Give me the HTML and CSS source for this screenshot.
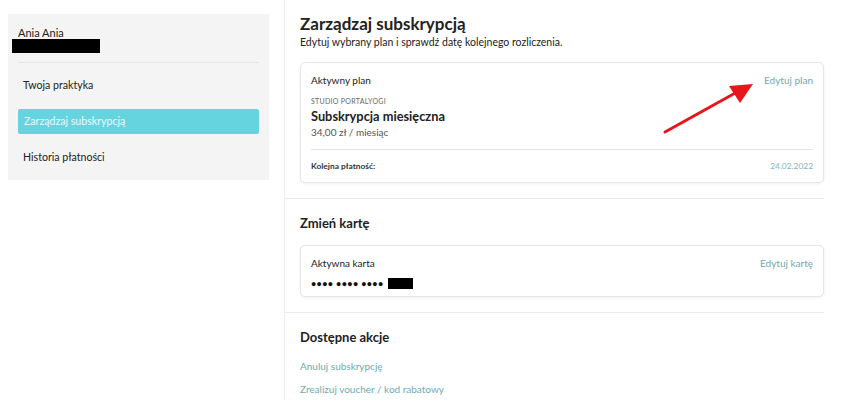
FILE: index.html
```html
<!DOCTYPE html>
<html lang="pl">
<head>
<meta charset="utf-8">
<link rel="stylesheet" href="styles.css">
</head>
<body>
<div class="page">
  <aside class="sidebar">
    <div class="user">
      <div class="user-name">Ania Ania</div>
      <div class="redact redact-email"></div>
    </div>
    <nav class="nav">
      <a class="nav-item">Twoja praktyka</a>
      <a class="nav-item active">Zarządzaj subskrypcją</a>
      <a class="nav-item">Historia płatności</a>
    </nav>
  </aside>
  <main class="main">
    <section class="section section-first">
      <h1 class="title">Zarządzaj subskrypcją</h1>
      <p class="subtitle">Edytuj wybrany plan i sprawdź datę kolejnego rozliczenia.</p>
      <div class="card card-plan">
        <div class="card-row">
          <span class="card-label">Aktywny plan</span>
          <a class="link">Edytuj plan</a>
        </div>
        <div class="studio">STUDIO PORTALYOGI</div>
        <div class="plan-name">Subskrypcja miesięczna</div>
        <div class="plan-price">34,00 zł / miesiąc</div>
        <div class="card-foot">
          <span class="foot-label">Kolejna płatność:</span>
          <span class="foot-date">24.02.2022</span>
        </div>
      </div>
    </section>
    <section class="section">
      <h2 class="heading">Zmień kartę</h2>
      <div class="card card-card">
        <div class="card-row">
          <span class="card-label">Aktywna karta</span>
          <a class="link">Edytuj kartę</a>
        </div>
        <div class="card-number"><span class="dots">•••• •••• ••••</span><span class="redact redact-num"></span></div>
      </div>
    </section>
    <section class="section section-last">
      <h2 class="heading">Dostępne akcje</h2>
      <a class="action">Anuluj subskrypcję</a>
      <a class="action">Zrealizuj voucher / kod rabatowy</a>
    </section>
  </main>
</div>
<svg class="arrow" width="110" height="70" viewBox="0 0 110 70">
  <line x1="8" y1="60" x2="80" y2="20" stroke="#e8151b" stroke-width="3" stroke-linecap="round"/>
  <polygon points="96,12 72,14 83,31" fill="#e8151b"/>
</svg>
</body>
</html>
```
FILE: styles.css
```css
* { box-sizing: border-box; }
html, body { margin: 0; padding: 0; background: #fff; }
body {
  font-family: Lato, "Open Sans", sans-serif;
  color: #222;
  width: 850px;
  height: 400px;
  overflow: hidden;
  position: relative;
}
.page {
  display: flex;
  align-items: flex-start;
  padding-left: 8px;
}
.sidebar {
  width: 261px;
  margin-top: 14px;
  background: #f4f4f4;
  padding: 10px 10px 10px 10px;
  height: 166px;
}
.user {
  padding: 2px 0 9px 0;
  border-bottom: 1px solid #e4e4e4;
}
.user-name {
  font-size: 11px;
  line-height: 13px;
  color: #222;
}
.redact { display: inline-block; background: #000; }
.redact-email {
  width: 88px;
  height: 14px;
  margin-left: -6px;
  display: block;
}
.nav {
  display: flex;
  flex-direction: column;
  gap: 11px;
  padding-top: 10px;
}
.nav-item {
  display: block;
  height: 25px;
  line-height: 25px;
  padding-left: 5px;
  font-size: 10.6px;
  color: #222;
  border-radius: 2px;
}
.nav-item.active {
  background: #66d4df;
  color: #e9fbfd;
  padding-left: 6px;
}
.main {
  margin-left: 15px;
  width: 540px;
  border-left: 1px solid #ececec;
  min-height: 400px;
}
.section {
  padding: 0 0 15px 15px;
  border-bottom: 1px solid #ebebeb;
}
.section-first { padding-top: 14px; padding-bottom: 15px; }
.section-last { border-bottom: none; }
.title {
  margin: 0;
  font-size: 17px;
  line-height: 20px;
  font-weight: 700;
  color: #222;
}
.subtitle {
  margin: 0;
  font-size: 10.5px;
  line-height: 16px;
  color: #222;
}
.card {
  border: 1px solid #e6e6e6;
  border-radius: 5px;
  box-shadow: 0 1px 3px rgba(0,0,0,0.06);
  padding: 0 10px;
  background: #fff;
}
.card-plan { margin-top: 12px; padding-top: 9px; padding-bottom: 9px; }
.card-row {
  display: flex;
  justify-content: space-between;
  align-items: center;
  height: 15px;
}
.card-label { font-size: 10px; color: #222; }
.link { font-size: 10px; color: #6faab2; }
.studio {
  margin-top: 9px;
  font-size: 7px;
  letter-spacing: 0.3px;
  color: #666;
  line-height: 10px;
}
.plan-name {
  font-size: 12.8px;
  font-weight: 700;
  line-height: 18px;
  margin-top: 1px;
  color: #222;
}
.plan-price {
  font-size: 10px;
  line-height: 14px;
  color: #555;
}
.card-foot {
  margin-top: 10px;
  border-top: 1px solid #e6e6e6;
  padding-top: 9px;
  display: flex;
  justify-content: space-between;
  align-items: center;
  height: 24px;
}
.foot-label { font-size: 8.4px; font-weight: 700; color: #333; }
.foot-date { font-size: 8.4px; color: #7fb3ba; }
.heading {
  margin: 0;
  padding-top: 16px;
  font-size: 13px;
  line-height: 17px;
  font-weight: 700;
  color: #222;
}
.card-card { margin-top: 13px; padding-top: 9px; padding-bottom: 6px; }
.card-number {
  margin-top: 6px;
  display: flex;
  align-items: center;
  height: 14px;
}
.dots { font-size: 9px; letter-spacing: 0.4px; color: #111; font-weight: 700; }
.redact-num { width: 25px; height: 11px; margin-left: 4px; }
.action {
  display: block;
  font-size: 10px;
  color: #6faab2;
  line-height: 14px;
  margin-top: 9px;
}
.section-last .heading { margin-bottom: 13px; padding-top: 16px; }
.arrow {
  position: absolute;
  left: 657px;
  top: 72px;
}
```
